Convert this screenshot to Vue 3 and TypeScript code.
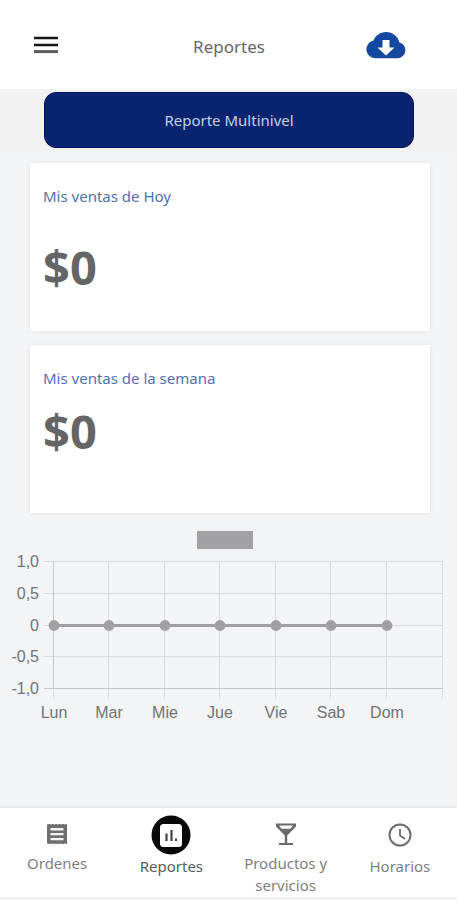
<script setup lang="ts">
interface Card {
  title: string
  amount: string
  spaced: boolean
}

const cards: Card[] = [
  { title: 'Mis ventas de Hoy', amount: '$0', spaced: true },
  { title: 'Mis ventas de la semana', amount: '$0', spaced: false },
]

const days = ['Lun', 'Mar', 'Mie', 'Jue', 'Vie', 'Sab', 'Dom'].map((label, i) => ({
  label,
  x: 54 + Math.floor(i * 55.5),
}))

const ticks = [
  { label: '1,0', y: 36 },
  { label: '0,5', y: 68 },
  { label: '0', y: 100 },
  { label: '-0,5', y: 131 },
  { label: '-1,0', y: 163 },
]
</script>

<template>
  <div class="page">
    <header class="header">
      <button class="icon-button menu" type="button" aria-label="Menu">
        <svg width="26" height="18" viewBox="0 0 26 18">
          <path d="M1 2h24M1 9h24" stroke="#161616" stroke-width="2.300" />
          <path d="M1 15.600h24" stroke="#5c5c5c" stroke-width="3" />
        </svg>
      </button>
      <h1 class="title">Reportes</h1>
      <button class="icon-button download" type="button" aria-label="Descargar">
        <svg width="42" height="28" viewBox="0 0 42 28">
          <path
            d="M10 27.3A9 9 0 0 1 8.500 9.500C10.500 4.500 15.500 1 21 1c6.500 0 12 4.300 13.200 10.200A8.200 8.200 0 0 1 33 27.300Z"
            fill="#1448a0"
          />
          <path d="M17.500 9h7v7.500h5L21 24.500 12.500 16.500h5Z" fill="#fff" />
        </svg>
      </button>
    </header>

    <div class="action">
      <button class="report-button" type="button">Reporte Multinivel</button>
    </div>

    <main class="content">
      <section v-for="card in cards" :key="card.title" class="card">
        <h2 class="card-title">{{ card.title }}</h2>
        <p class="amount" :class="{ spaced: card.spaced }">{{ card.amount }}</p>
      </section>
    </main>

    <svg class="chart" viewBox="0 0 457 202" role="img" aria-label="Ventas por día">
      <rect x="197" y="6" width="56" height="18" fill="#a2a2a4" />
      <g stroke="#d9dadc">
        <path v-for="tick in ticks" :key="tick.label" :d="`M44 ${tick.y + 0.5}H443`" />
        <path v-for="day in days" :key="day.label" :d="`M${day.x - 0.5} 36V174`" />
        <path d="M442.500 36V174" />
      </g>
      <path d="M53.500 36V163M44 163.500H443" stroke="#c6c7c9" />
      <path d="M54 100.500H387" stroke="#a0a0a2" stroke-width="3" />
      <circle v-for="day in days" :key="day.label" :cx="day.x" cy="100.500" r="5.400" fill="#a0a0a2" />
      <g class="labels">
        <text v-for="tick in ticks" :key="tick.label" x="39" :y="tick.y + 6" text-anchor="end">
          {{ tick.label }}
        </text>
        <text v-for="day in days" :key="day.label" :x="day.x" y="193" text-anchor="middle">
          {{ day.label }}
        </text>
      </g>
    </svg>

    <nav class="tabs">
      <a class="tab" href="#ordenes">
        <span class="tab-icon">
          <svg width="22" height="22" viewBox="0 0 22 22">
            <path d="M1 1h20v20H1Z" fill="#6f6f6f" />
            <path d="M4.500 5h13v2.500h-13ZM4.500 10h13v2.300h-13ZM4.500 15h13v2.300h-13Z" fill="#f4f4f4" />
            <path d="M1 1h20M1 21h20" stroke="#fff" stroke-dasharray="1.400 2" />
          </svg>
        </span>
        <span>Ordenes</span>
      </a>
      <a class="tab low active" href="#reportes" aria-current="page">
        <span class="tab-icon">
          <svg width="40" height="40" viewBox="0 0 40 40">
            <circle cx="20" cy="20" r="19.500" fill="#080808" />
            <rect x="9" y="9" width="22" height="23" rx="3.500" fill="#fff" />
            <path d="M15.500 18.500v7.500M20.500 15v11" stroke="#444" stroke-width="2.200" />
            <path d="M25 23.500V26" stroke="#444" stroke-width="2.200" />
          </svg>
        </span>
        <span>Reportes</span>
      </a>
      <a class="tab" href="#productos">
        <span class="tab-icon">
          <svg width="22" height="24" viewBox="0 0 22 24">
            <path
              d="M1 1.500h20v3L12.200 13.500V21H18v2H4v-2h5.800v-7.500L1 4.500ZM4 3.500l2.600 3.300h8.800L18 3.500Z"
              fill="#6a6a6a"
              fill-rule="evenodd"
            />
          </svg>
        </span>
        <span>Productos y servicios</span>
      </a>
      <a class="tab low" href="#horarios">
        <span class="tab-icon">
          <svg width="24" height="24" viewBox="0 0 24 24" fill="none" stroke="#6c6c6c">
            <circle cx="12" cy="12" r="10.500" stroke-width="2" />
            <path d="M12 6v6.500l5 3.500" stroke-width="1.800" />
          </svg>
        </span>
        <span>Horarios</span>
      </a>
    </nav>
  </div>
</template>

<style>
body {
  margin: 0;
  background: #f3f4f6;
}
</style>

<style scoped>
.page {
  display: flex;
  flex-direction: column;
  box-sizing: border-box;
  min-height: 100vh;
  font-family: 'Noto Sans', 'Open Sans', sans-serif;
  font-weight: 400;
}

.header {
  display: grid;
  grid-template-columns: 1fr auto 1fr;
  align-items: center;
  box-sizing: border-box;
  height: 89px;
  padding: 0 50px 0 33px;
  background: #fff;
}

.icon-button {
  display: flex;
  padding: 0;
  border: 0;
  background: none;
  cursor: pointer;
}

.download {
  justify-self: end;
}

.title {
  margin: 4px 0 0 18px;
  color: #666;
  font-size: 17px;
  font-weight: 400;
  line-height: 24px;
}

.action {
  padding: 3px 43px 4px 44px;
  background: #f2f2f2;
}

.report-button {
  display: block;
  width: 100%;
  height: 56px;
  padding: 0;
  border: 1px solid #06115c;
  border-radius: 12px;
  background: #08246e;
  color: #c3d0ec;
  font: inherit;
  font-size: 15px;
  cursor: pointer;
}

.content {
  display: flex;
  flex-direction: column;
  gap: 14px;
  padding: 11px 27px 12px 30px;
}

.card {
  box-sizing: border-box;
  height: 168px;
  padding: 22px 13px;
  background: #fff;
  box-shadow: 0 0 4px #dfe0e3;
}

.card-title {
  margin: 0;
  color: #5070b4;
  font-size: 15px;
  font-weight: 400;
  line-height: 22px;
}

.amount {
  margin: 10px 0 0;
  color: #656565;
  font-size: 47px;
  font-weight: 700;
  line-height: 64px;
}

.amount.spaced {
  margin-top: 28px;
}

.chart {
  display: block;
  width: 100%;
}

.labels {
  fill: #727375;
  font-family: 'Liberation Sans', Arial, sans-serif;
  font-size: 16px;
}

.tabs {
  display: grid;
  grid-template-columns: repeat(4, 1fr);
  box-sizing: border-box;
  min-height: 94px;
  margin-top: auto;
  padding-top: 7px;
  border-top: 2px solid #e8e9eb;
  border-bottom: 3px solid #f1f1f2;
  background: #fff;
}

.tab {
  display: flex;
  flex-direction: column;
  align-items: center;
  color: #808080;
  font-size: 15px;
  line-height: 22px;
  text-align: center;
  text-decoration: none;
}

.tab-icon {
  display: flex;
  align-items: center;
  justify-content: center;
  height: 37px;
}

.low .tab-icon {
  height: 40px;
}

.active {
  color: #5c5c5c;
}
</style>
